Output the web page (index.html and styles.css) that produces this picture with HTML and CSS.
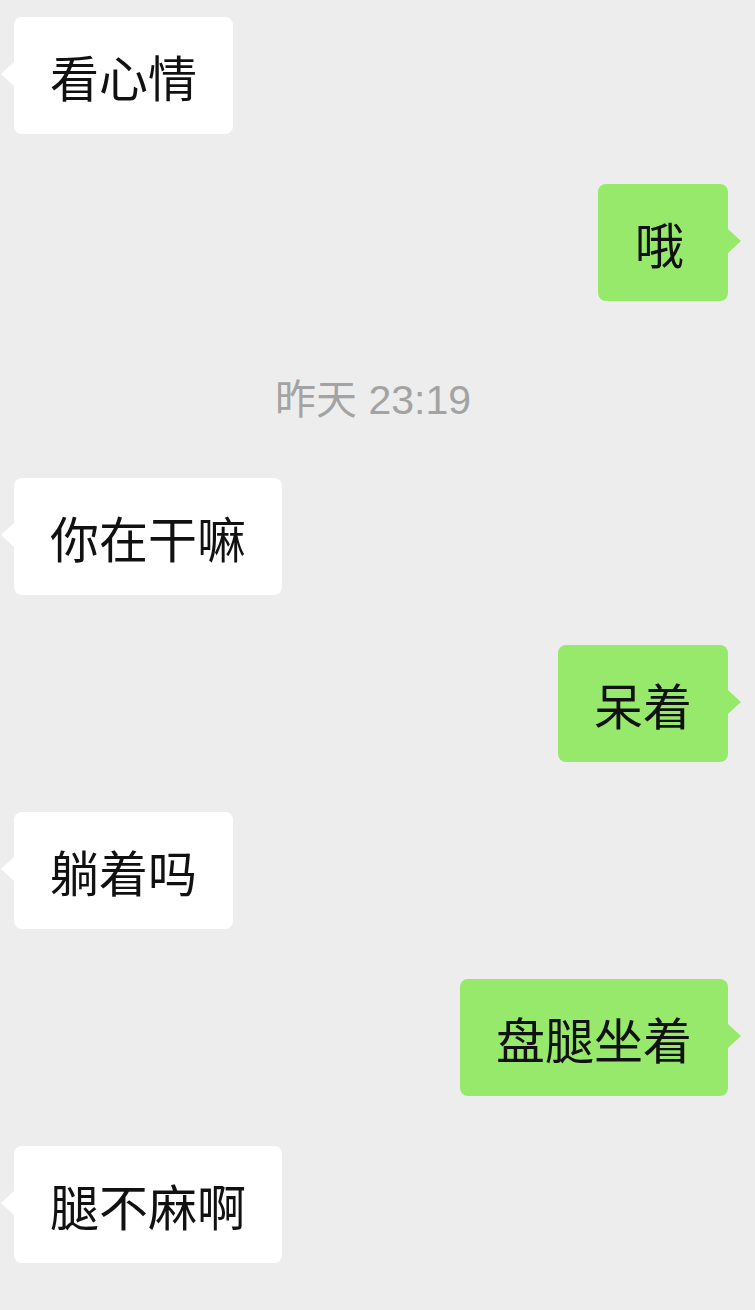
FILE: index.html
```html
<!DOCTYPE html>
<html lang="zh-CN">
<head>
<meta charset="utf-8">
<title>Chat</title>
<link rel="stylesheet" href="styles.css">
</head>
<body>
<div class="chat">
  <div class="row left"><div class="bubble in">看心情</div></div>
  <div class="row right"><div class="bubble out single">哦</div></div>
  <div class="time">昨天 23:19</div>
  <div class="row left"><div class="bubble in">你在干嘛</div></div>
  <div class="row right"><div class="bubble out">呆着</div></div>
  <div class="row left"><div class="bubble in">躺着吗</div></div>
  <div class="row right"><div class="bubble out">盘腿坐着</div></div>
  <div class="row left"><div class="bubble in">腿不麻啊</div></div>
</div>
</body>
</html>
```

FILE: styles.css
```css
html, body {
  margin: 0;
  padding: 0;
  background: #ededed;
}
body {
  width: 755px;
  height: 1310px;
  overflow: hidden;
  font-family: "Noto Sans CJK SC", "Noto Sans", sans-serif;
}
.chat {
  display: flex;
  flex-direction: column;
  gap: 50px;
  padding: 17px 27px 0 14px;
}
.row {
  display: flex;
}
.row.left { justify-content: flex-start; }
.row.right { justify-content: flex-end; }
.bubble {
  position: relative;
  font-size: 49px;
  line-height: 49px;
  padding: 34px 36px;
  border-radius: 8px;
  color: #111;
  white-space: nowrap;
}
.bubble.in { background: #ffffff; }
.bubble.out { background: #97e96b; }
.bubble.single {
  padding: 34px 44px 34px 37px;
}
.bubble::before {
  content: "";
  position: absolute;
  top: 45px;
  width: 0;
  height: 0;
  border-top: 12px solid transparent;
  border-bottom: 12px solid transparent;
}
.bubble.in::before {
  left: -13px;
  border-right: 13px solid #ffffff;
}
.bubble.out::before {
  right: -13px;
  border-left: 13px solid #97e96b;
}
.time {
  margin: 25px 0 4px;
  text-align: center;
  font-family: "Liberation Sans", "Noto Sans CJK SC", sans-serif;
  font-size: 41px;
  line-height: 48px;
  color: #a3a3a3;
  padding-left: 4px;
}
```
